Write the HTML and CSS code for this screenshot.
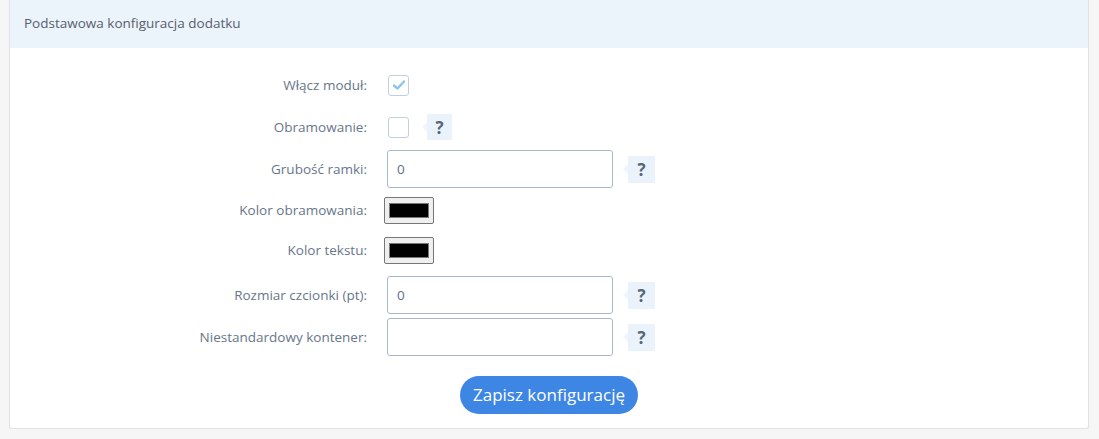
FILE: index.html
```html
<!DOCTYPE html>
<html lang="pl">
<head>
<meta charset="utf-8">
<title>Podstawowa konfiguracja dodatku</title>
<link rel="stylesheet" href="styles.css">
</head>
<body>
<div class="panel">
  <div class="panel-heading">Podstawowa konfiguracja dodatku</div>
  <form class="panel-body">
    <div class="row">
      <label class="label">Włącz moduł:</label>
      <div class="control">
        <span class="checkbox checked">
          <svg width="14" height="12" viewBox="0 0 14 12"><path d="M2 6.5 L5.5 9.5 L12 2.5" fill="none" stroke="#8cc3ef" stroke-width="2.4" stroke-linecap="round" stroke-linejoin="round"/></svg>
        </span>
      </div>
    </div>
    <div class="row">
      <label class="label">Obramowanie:</label>
      <div class="control">
        <span class="checkbox"></span>
        <span class="help help-near">?</span>
      </div>
    </div>
    <div class="row">
      <label class="label">Grubość ramki:</label>
      <div class="control">
        <input class="text-input" type="text" value="0">
        <span class="help">?</span>
      </div>
    </div>
    <div class="row row-color">
      <label class="label">Kolor obramowania:</label>
      <div class="control">
        <input class="color-input" type="color" value="#000000">
      </div>
    </div>
    <div class="row row-color row-color-last">
      <label class="label">Kolor tekstu:</label>
      <div class="control">
        <input class="color-input" type="color" value="#000000">
      </div>
    </div>
    <div class="row">
      <label class="label">Rozmiar czcionki (pt):</label>
      <div class="control">
        <input class="text-input" type="text" value="0">
        <span class="help">?</span>
      </div>
    </div>
    <div class="row">
      <label class="label">Niestandardowy kontener:</label>
      <div class="control">
        <input class="text-input" type="text" value="">
        <span class="help">?</span>
      </div>
    </div>
    <div class="actions">
      <button type="button" class="btn">Zapisz konfigurację</button>
    </div>
  </form>
</div>
</body>
</html>
```
FILE: styles.css
```css
html, body {
  margin: 0;
  padding: 0;
  background: #f6f6f6;
}
body {
  font-family: "Open Sans", "Noto Sans", sans-serif;
  font-size: 13.5px;
  color: #67768a;
}
.panel {
  margin-left: 9px;
  width: 1078px;
  background: #fff;
  border: 1px solid #e2e2e2;
  border-top: none;
  border-radius: 0 0 3px 3px;
  box-shadow: 0 1px 1px rgba(0,0,0,0.04);
}
.panel-heading {
  height: 48px;
  background: #ebf3fb;
  padding-left: 14px;
  display: flex;
  align-items: center;
  padding-bottom: 3px;
  box-sizing: border-box;
  color: #58606e;
  font-size: 13.5px;
}
.panel-body {
  padding: 18px 0 14px;
  display: flex;
  flex-direction: column;
  gap: 4px;
  margin: 0;
}
.row {
  display: grid;
  grid-template-columns: 357px 1fr;
  column-gap: 20px;
  height: 38px;
  align-items: center;
}
.row-color {
  height: 36px;
}
.row-color-last {
  margin-bottom: 4px;
}
.label {
  text-align: right;
  color: #67768a;
}
.control {
  display: flex;
  align-items: center;
}
.checkbox {
  width: 19px;
  height: 19px;
  border: 1px solid #c2cfe0;
  border-radius: 3px;
  display: flex;
  align-items: center;
  justify-content: center;
  box-sizing: content-box;
  margin-left: 1px;
}
.text-input {
  width: 226px;
  height: 38px;
  box-sizing: border-box;
  border: 1px solid #aab6cc;
  border-radius: 3px;
  padding: 0 9px;
  font-family: inherit;
  font-size: 13.5px;
  color: #5b6f86;
  background: #fff;
  outline: none;
}
.help {
  position: relative;
  width: 27px;
  height: 27px;
  margin-left: 15px;
  background: #eaf2fb;
  color: #566577;
  font-weight: 700;
  font-size: 17px;
  display: flex;
  align-items: center;
  justify-content: center;
  font-family: "Open Sans", sans-serif;
}
.help::before {
  content: "";
  position: absolute;
  left: -5px;
  top: 50%;
  margin-top: -5px;
  border-style: solid;
  border-width: 5px 5px 5px 0;
  border-color: transparent #f2f6fb transparent transparent;
}
.help-near {
  margin-left: 18px;
  width: 25px;
  height: 26px;
}
.color-input {
  width: 50px;
  height: 27px;
  margin: 0 0 0 -3px;
  padding: 1px 2px;
  border: 1px solid #767676;
  border-radius: 2px;
  background: #efefef;
  box-sizing: border-box;
}
.actions {
  display: flex;
  margin-top: 16px;
  padding-left: 450px;
}
.btn {
  width: 178px;
  height: 38px;
  border: none;
  border-radius: 19px;
  background: #3d86e4;
  color: #fff;
  font-family: inherit;
  font-size: 17px;
  padding: 0 0 2px;
  cursor: pointer;
}
```
